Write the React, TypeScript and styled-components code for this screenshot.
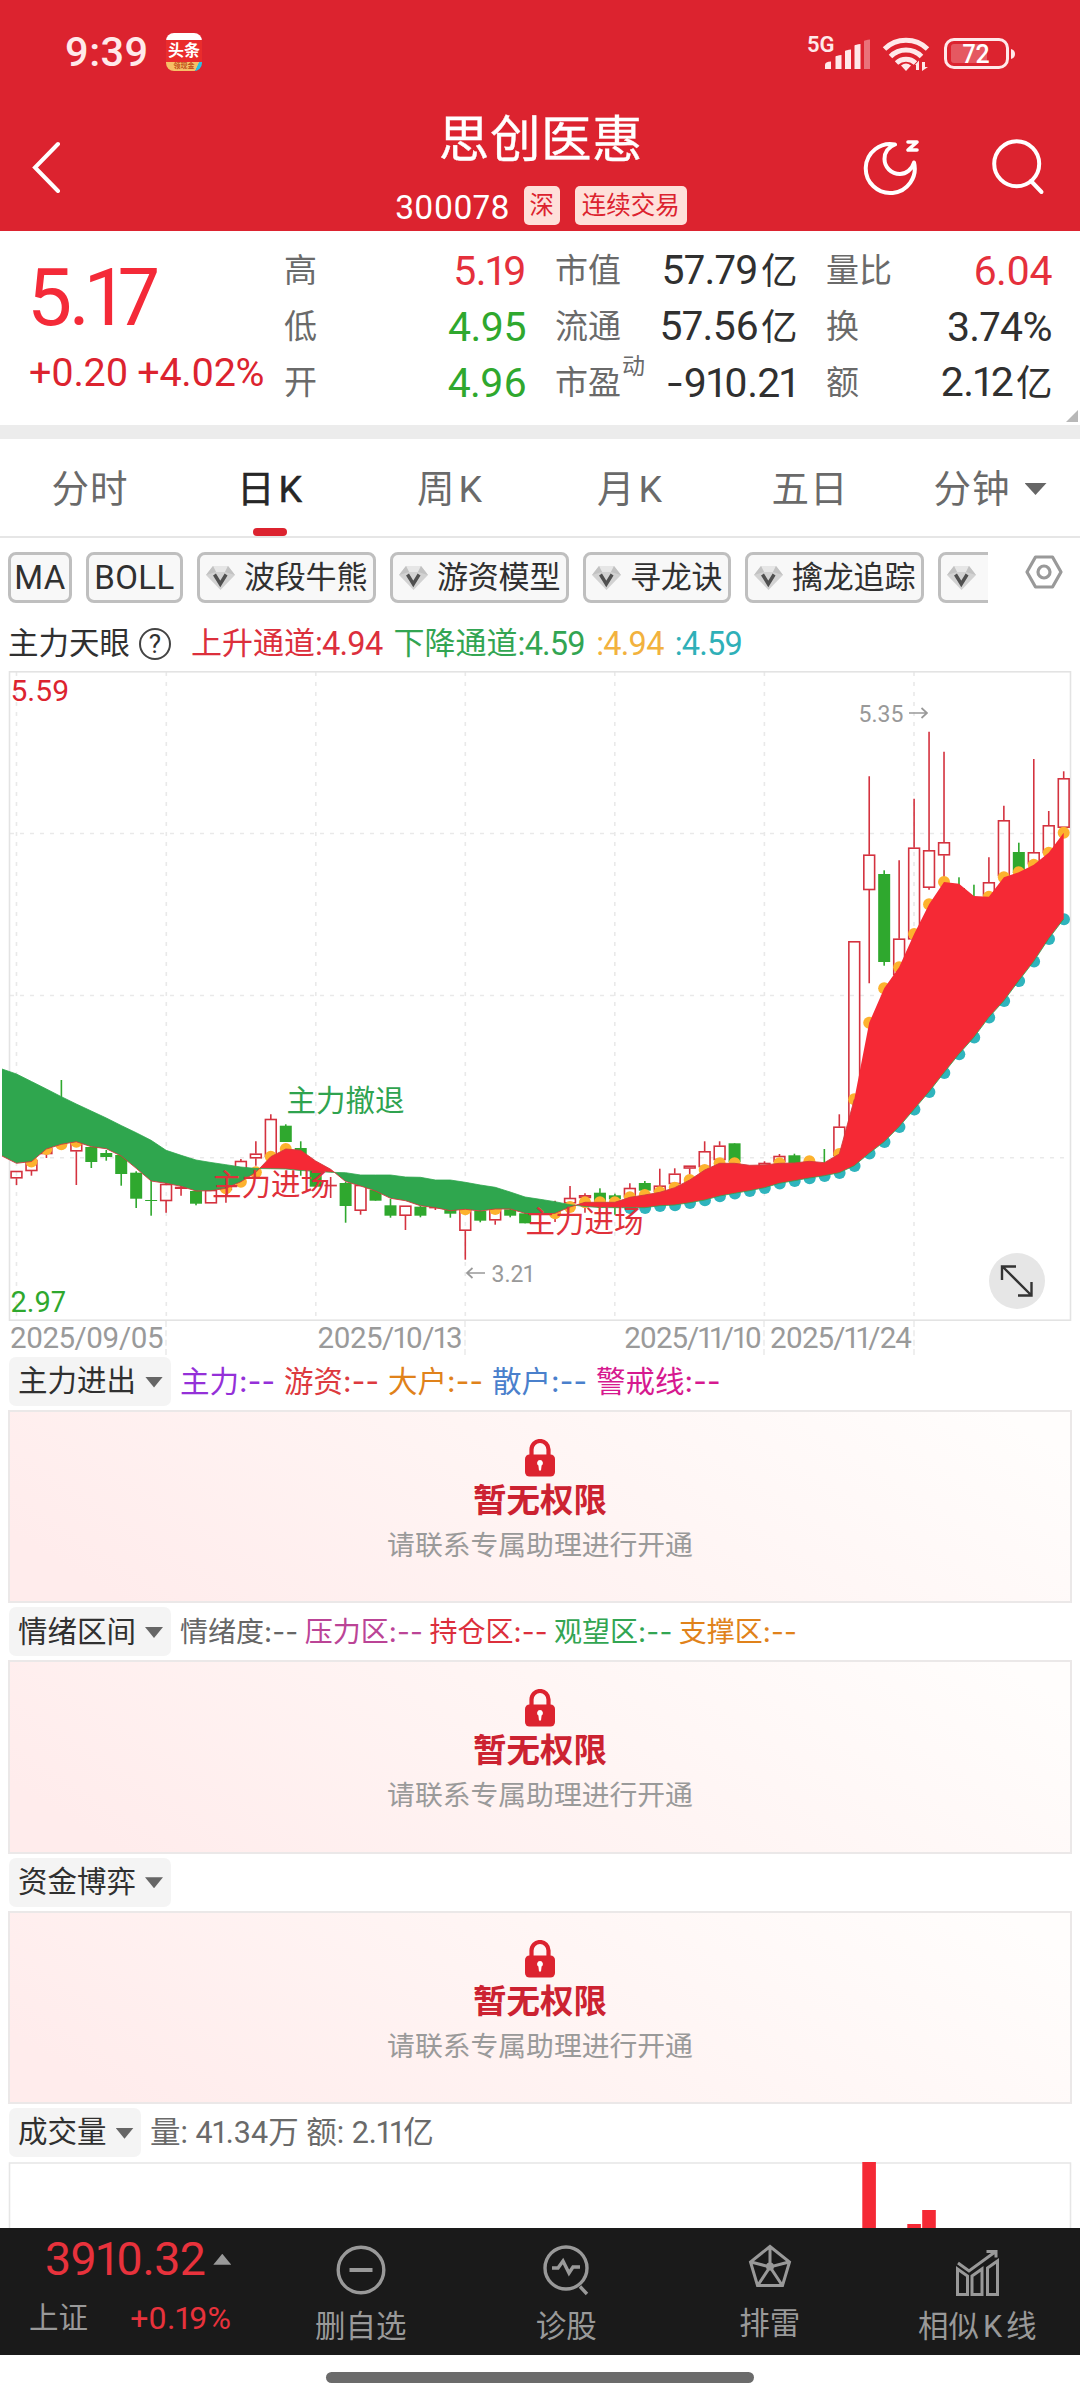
import React from 'react';
import styled, { createGlobalStyle } from 'styled-components';

const RED = '#dc232f';
const UP = '#f42a38';
const DOWN = '#2fa82e';
const INK = '#303030';
const GREY = '#6a6a6a';

const Global = createGlobalStyle`
  * { box-sizing: border-box; }
  body {
    margin: 0;
    background: #fff;
    font-family: Roboto, 'Noto Sans CJK SC', sans-serif;
    font-stretch: 94%;
    font-feature-settings: 'pnum';
    line-height: 1.2;
    color: ${INK};
    -webkit-font-smoothing: antialiased;
  }
`;

const Screen = styled.main`
  width: 1080px;
  height: 2400px;
  overflow: hidden;
  display: flex;
  flex-direction: column;
  background: #fff;
  white-space: nowrap;
`;

/* ---------- header ---------- */
const Header = styled.header`
  height: 231px;
  background: ${RED};
  color: #fff;
  flex: none;
`;
const StatusBar = styled.div`
  height: 104px;
  padding: 0 62px 0 65px;
  display: flex;
  align-items: center;
  color: #ffe9ea;
`;
const Clock = styled.span`
  font-size: 41.5px;
  line-height: 60px;
  font-weight: 460;
  letter-spacing: 0.3px;
  width: 101px;
`;
const AppBadge = styled.span`
  width: 36px;
  height: 38px;
  border-radius: 8px;
  overflow: hidden;
  background:
    linear-gradient(115deg, transparent 82%, #2cc0e0 83%) 0 29px / 36px 9px no-repeat,
    linear-gradient(#fff 0 7px, #ea2c2c 7px 29px, #f6c067 29px);
  display: flex;
  flex-direction: column;
  align-items: center;
  padding-top: 9px;
  color: #fff;
  font-weight: 700;
  font-size: 16px;
  line-height: 18px;
  margin-right: auto;
`;
const AppBadgeSub = styled.span`
  font-size: 7px;
  line-height: 9px;
  margin-top: 2px;
  color: #c0501c;
`;
const TitleBar = styled.div`
  height: 126px;
  display: grid;
  grid-template-columns: 300px 1fr 300px;
`;
const BackSlot = styled.div`
  padding: 37px 0 0 30px;
`;
const TitleCol = styled.div`
  display: flex;
  flex-direction: column;
  align-items: center;
`;
const Title = styled.h1`
  margin: 6px 0 0 2px;
  font-size: 50.5px;
  font-weight: 400;
  line-height: 60px;
  height: 75px;
  letter-spacing: 0.6px;
  -webkit-text-stroke: 0.4px #fff;
`;
const CodeRow = styled.div`
  display: flex;
  align-items: center;
  height: 40px;
  margin-left: 2px;
`;
const Code = styled.span`
  font-size: 33.5px;
  margin-right: 14px;
  padding-top: 7px;
  letter-spacing: 0.1px;
`;
const Badge = styled.span<{ $w: number }>`
  width: ${p => p.$w}px;
  height: 39px;
  margin-right: ${p => (p.$w < 50 ? 15 : 0)}px;
  border-radius: 5px;
  background: #fee0da;
  color: ${RED};
  font-size: 24.5px;
  line-height: 40px;
  text-align: center;
`;
const Actions = styled.div`
  display: flex;
  padding: 34px 0 0 82px;
  gap: 70px;
`;

/* ---------- quote ---------- */
const Quote = styled.section`
  height: 194px;
  flex: none;
  display: grid;
  grid-template-columns: 225px 242px 242px 226px;
  column-gap: 29px;
  padding-left: 30px;
  position: relative;
`;
const PriceCol = styled.div`
  padding-top: 24px;
`;
const Price = styled.div`
  color: ${UP};
  font-size: 80.5px;
  line-height: 86px;
  font-stretch: 89%;
  letter-spacing: -3.4px;
  margin-left: -3px;
`;
const Change = styled.div`
  color: ${RED};
  font-size: 39.5px;
  line-height: 50px;
  margin-top: 7px;
  margin-left: -1px;
  letter-spacing: -0.4px;
`;
const StatCol = styled.div`
  padding-top: 12px;
`;
const Stat = styled.div`
  height: 56px;
  display: flex;
  justify-content: space-between;
  align-items: center;
`;
const StatLabel = styled.span`
  color: ${GREY};
  font-size: 33px;
`;
const Sup = styled.sup`
  font-size: 23px;
  line-height: 0;
  vertical-align: 20px;
  margin-left: 1px;
`;
const StatValue = styled.span<{ $c?: string }>`
  color: ${p => p.$c || INK};
  font-size: 41px;
  line-height: 56px;
  letter-spacing: -0.6px;
`;
const Minus = styled.span`
  display: inline-block;
  transform: scaleX(1.3);
  margin-right: 4px;
`;
const Yi = styled.span`
  font-size: 36.5px;
  margin-left: 3px;
`;
const Corner = styled.i`
  position: absolute;
  right: 2px;
  bottom: 3px;
  border: 6px solid transparent;
  border-right-color: #b8b8b8;
  border-bottom-color: #b8b8b8;
`;
const Band = styled.div`
  height: 14px;
  background: #ececec;
  flex: none;
`;

/* ---------- tabs ---------- */
const Tabs = styled.nav`
  height: 99px;
  flex: none;
  display: grid;
  grid-template-columns: repeat(6, 180px);
  border-bottom: 2px solid #e6e6e6;
`;
const Tab = styled.div<{ $on?: boolean }>`
  display: flex;
  align-items: center;
  justify-content: center;
  gap: 14px;
  font-size: 37.5px;
  letter-spacing: 1px;
  padding-top: 3px;
  color: ${p => (p.$on ? '#262626' : GREY)};
  -webkit-text-stroke: ${p => (p.$on ? '0.5px #262626' : '0')};
  position: relative;
  &::after {
    content: '';
    display: ${p => (p.$on ? 'block' : 'none')};
    position: absolute;
    bottom: 0;
    left: 73px;
    width: 34px;
    height: 8px;
    border-radius: 4px;
    background: ${RED};
  }
`;
const TabK = styled.span`
  margin-left: -11px;
`;
const Caret = styled.i<{ $w: number; $h: number; $up?: boolean }>`
  width: ${p => p.$w}px;
  height: ${p => p.$h}px;
  flex: none;
  background: ${p => (p.$up ? '#999' : '#666')};
  clip-path: ${p => (p.$up ? 'polygon(50% 0, 100% 100%, 0 100%)' : 'polygon(0 0, 100% 0, 50% 100%)')};
`;

/* ---------- chips ---------- */
const ChipBar = styled.div`
  height: 78px;
  flex: none;
  padding: 14px 17px 0 8px;
  display: flex;
  justify-content: space-between;
`;
const ChipList = styled.div`
  width: 980px;
  overflow: hidden;
  display: flex;
  gap: 14px;
`;
const Chip = styled.div<{ $w: number; $latin?: boolean }>`
  width: ${p => p.$w}px;
  height: 51px;
  flex: none;
  border: 3px solid #bfbfbf;
  border-radius: 8px;
  background: #f8f8f8;
  display: flex;
  align-items: center;
  justify-content: ${p => (p.$latin ? 'center' : 'flex-start')};
  padding-left: ${p => (p.$latin ? 0 : 5)}px;
  gap: 8px;
  overflow: hidden;
  font-size: ${p => (p.$latin ? 33 : 31)}px;
  line-height: 45px;
  letter-spacing: ${p => (p.$latin ? 0.4 : -0.2)}px;
`;

/* ---------- chart ---------- */
const Legend = styled.div`
  height: 55px;
  flex: none;
  display: flex;
  align-items: center;
  padding: 1px 0 0 8px;
  font-size: 30.5px;
`;
const LegendItem = styled.span<{ $c: string; $gap: number }>`
  color: ${p => p.$c};
  margin-left: ${p => p.$gap}px;
  font-size: 31px;
`;
const Num = styled.span`
  font-size: 32.5px;
  letter-spacing: -0.8px;
  vertical-align: -1px;
  line-height: 0;
`;
const ChartBox = styled.div`
  height: 650px;
  flex: none;
  position: relative;
`;
const ExpandButton = styled.button`
  position: absolute;
  left: 989px;
  top: 582px;
  width: 56px;
  height: 56px;
  padding: 0;
  border: 0;
  border-radius: 50%;
  background: #e6e6e6;
`;
const Dates = styled.div`
  height: 32px;
  flex: none;
  display: grid;
  grid-template-columns: 167px 299px 299px 150px;
`;
const DateCell = styled.span<{ $ls?: number }>`
  border-right: 2px dashed #efefef;
  text-align: right;
  padding-right: 2px;
  color: #9a9a9a;
  font-size: 29.5px;
  line-height: 34px;
  letter-spacing: ${p => p.$ls ?? -0.6}px;
`;

/* ---------- locked panels ---------- */
const PanelHead = styled.div`
  height: 57px;
  flex: none;
  padding: 4px 0 4px 9px;
  display: flex;
  align-items: center;
`;
const Picker = styled.div<{ $w: number }>`
  width: ${p => p.$w}px;
  height: 49px;
  border-radius: 7px;
  background: #f4f4f4;
  padding: 1px 0 0 9px;
  display: flex;
  align-items: center;
  gap: 9px;
  font-size: 29.5px;
  margin-right: 9px;
`;
const Series = styled.span<{ $c: string; $w: number; $s: number }>`
  width: ${p => p.$w}px;
  padding-top: 2px;
  font-size: ${p => p.$s}px;
  color: ${p => p.$c};
`;
const Dash = styled.span`
  font-family: Inter, sans-serif;
  letter-spacing: 0.2px;
`;
const Locked = styled.div`
  height: 193.4px;
  flex: none;
  margin: 0 8px;
  border: 2px solid #ebe8e8;
  background: linear-gradient(32deg, #ffecec 8%, #fff5f4 54%, #fffdfc 95%);
  display: flex;
  flex-direction: column;
  align-items: center;
  padding-top: 27px;
`;
const LockTitle = styled.div`
  margin-top: 3px;
  font-size: 33.5px;
  line-height: 42px;
  font-weight: 700;
  color: #cc2231;
`;
const LockText = styled.div`
  margin-top: 3px;
  font-size: 27.8px;
  line-height: 42px;
  color: #9a9a9a;
`;
const VolumeText = styled.span`
  font-size: 30.5px;
  padding-top: 2px;
  color: ${GREY};
`;
const VolumeBox = styled.div`
  height: 67px;
  flex: none;
`;

/* ---------- bottom bar ---------- */
const BottomBar = styled.footer`
  height: 127px;
  flex: none;
  background: #1a1a1a;
  color: #999;
  display: grid;
  grid-template-columns: 258px repeat(4, 205.5px);
`;
const IndexCell = styled.div`
  padding: 3px 27px 0 29px;
`;
const IndexValue = styled.div`
  display: flex;
  align-items: center;
  gap: 8px;
  padding-left: 16px;
  color: #e8323c;
  font-size: 46.5px;
  line-height: 56px;
  letter-spacing: -0.6px;
`;
const IndexRow = styled.div`
  display: flex;
  justify-content: space-between;
  align-items: center;
  margin-top: 11px;
  font-size: 29.5px;
  line-height: 40px;
`;
const IndexPct = styled.span`
  color: #e8323c;
  font-size: 32px;
`;
const NavItem = styled.div<{ $shift?: boolean }>`
  display: flex;
  flex-direction: column;
  align-items: center;
  padding-top: 14px;
  font-size: 30.5px;
  line-height: 40px;
  margin: ${p => (p.$shift ? '-3px 2px 0 -2px' : '0')};
  svg { margin-bottom: 9px; }
`;
const NavK = styled.span`
  margin: 0 4px;
`;
const HomeArea = styled.div`
  height: 45px;
  flex: none;
  display: flex;
  justify-content: center;
  padding-top: 17px;
`;
const HomeBar = styled.div`
  width: 428px;
  height: 11px;
  border-radius: 6px;
  background: #6b6b6b;
`;

/* ---------- icons ---------- */
const StatusIcons = () => (
  <svg width="212" height="44" viewBox="806 28 212 44" fill="#ffe9ea">
    <text x="807" y="49.500" fontSize="22" fontWeight="600">5G</text>
    <path d="M825 67v-4q0-3.500 6-3.500V67zM835.500 67V54.500q1-1 6-1.500v14zM845 67V49q1-1 6-1.500V67zM854.500 67V43.500q1-1 6-1.500V67z" />
    <path d="M864 67V39q1-1 6-1.500V67z" opacity=".4" />
    <g fill="none" stroke="#ffe9ea" strokeWidth="5">
      <path d="M884.500 47a31 31 0 0 1 43 0M890.500 54.500a22 22 0 0 1 31 0M896.500 61a14 14 0 0 1 19 0" />
    </g>
    <path d="M901 63.500q5-4 10 0L906 69z" />
    <path d="M915 63l4-4.500V68h-3v-5zM922 69V60h3v5h3z" />
    <rect x="945.500" y="37.500" width="62" height="28" rx="8.500" fill="none" stroke="#ffe9ea" strokeWidth="3" />
    <rect x="951" y="42" width="36" height="19" rx="3" opacity=".27" />
    <path d="M1011 47q4 1 4 5t-4 5z" />
    <text x="962.500" y="61" fontSize="25" fontWeight="500" fill="#fff">72</text>
  </svg>
);
const Back = () => (
  <svg width="34" height="52" viewBox="0 0 34 52" fill="none" stroke="#fff" strokeWidth="4" strokeLinecap="round">
    <path d="M28 3L5 26.500L28 50" />
  </svg>
);
const Moon = () => (
  <svg width="58" height="58" viewBox="862 138 58 58" fill="none" stroke="#fff" strokeWidth="4" strokeLinejoin="round" strokeLinecap="round">
    <path d="M895 144.500a24.500 24.500 0 1 0 19 18c-2 7-8 11.500-14 11.500c-9 0-15.500-7-15.500-15c0-7 4-12 10.500-14.500z" />
    <path d="M908 142h9l-9 8h9" strokeWidth="3.600" />
  </svg>
);
const Search = () => (
  <svg width="58" height="58" viewBox="990 138 58 58" fill="none" stroke="#fff" strokeWidth="4" strokeLinecap="round">
    <circle cx="1016.700" cy="163.700" r="22.500" />
    <path d="M1031 181l10.500 11" />
  </svg>
);
const Gem = () => (
  <svg width="31" height="26" viewBox="0 0 31 26">
    <path d="M8 1h15l7 9-14.500 15L1 10z" fill="#d2d2d2" />
    <path d="M8 1h15l-3 6H11z" fill="#e6e6e6" />
    <path d="M1 10l7-9 3 6zM30 10l-7-9-3 6z" fill="#c2c2c2" />
    <path d="M9.500 9.500l5.800 9.500 5.800-9.500" fill="none" stroke="#505050" strokeWidth="3.400" />
  </svg>
);
const HexIcon = styled.svg`
  margin-top: 3px;
`;
const Hex = () => (
  <HexIcon width="38" height="34" viewBox="0 0 38 34" fill="none" stroke="#999" strokeWidth="3.2">
    <path d="M10.500 2h17l8.500 15-8.500 15h-17L2 17z" strokeLinejoin="round" />
    <circle cx="19" cy="17" r="6" />
  </HexIcon>
);
const HelpMark = styled.span`
  width: 32px;
  height: 32px;
  margin: -1px 0 0 9px;
  border: 2.5px solid #444;
  border-radius: 50%;
  font-size: 26px;
  line-height: 28px;
  text-align: center;
`;
const Lock = () => (
  <svg width="32" height="38" viewBox="0 0 32 38">
    <path d="M7.500 17v-6.500a8.500 8.500 0 0 1 17 0V17" fill="none" stroke={RED} strokeWidth="4.200" />
    <rect x="1" y="15.500" width="30" height="22" rx="4.500" fill={RED} />
    <path d="M16 21a3 3 0 0 1 1.600 5.500L17 31.500h-2l-.6-5A3 3 0 0 1 16 21z" fill="#fff" />
  </svg>
);
const navProps = { width: 56, height: 56, fill: 'none', stroke: '#999', strokeWidth: 3.4 };
const MinusIcon = () => (
  <svg {...navProps} viewBox="333 2242 56 56">
    <circle cx="361" cy="2270" r="22.800" />
    <path d="M349.500 2270h23" strokeWidth="4" />
  </svg>
);
const PulseIcon = () => (
  <svg {...navProps} viewBox="538 2242 56 56">
    <circle cx="566" cy="2268" r="21" />
    <path d="M552 2268h6l5-7 6 12 4-6h7M580 2286.500l7 7.500" />
  </svg>
);
const StarIcon = () => (
  <svg {...navProps} viewBox="742 2239 56 56" strokeWidth={3}>
    <path d="M770 2246.500l19.500 15.500-7 23.500h-25L750.500 2262zM770 2247v20M751 2262l19 5 19-5M758 2285l12-18 12 18" />
    <circle cx="770" cy="2266.500" r="2.500" fill="#999" />
  </svg>
);
const TrendIcon = () => (
  <svg {...navProps} viewBox="949 2242 56 56" strokeWidth={3}>
    <path d="M957.500 2269l10 7v18.500h-10zM972 2276l10-7v25.500h-10zM987.500 2268l10-7v33.500h-10z" />
    <path d="M958 2263l11 8 26-19M986.500 2251.500h9.500v6" />
  </svg>
);

/* ---------- price chart ---------- */
const STEP = 14.96;
const px = (i: number) => 16.5 + STEP * i;

// [index, up, high, bodyTop, bodyBottom, low]
const candles: [number, boolean, number, number, number, number][] = [
  [0, true, 1171, 1171, 1178.3, 1185], [1, true, 1160, 1160, 1171, 1175.7], [2, true, 1148, 1148, 1154, 1158],
  [3, false, 1080, 1120, 1136, 1140], [4, true, 1143, 1143, 1151.3, 1185], [5, false, 1147, 1147, 1162, 1168],
  [6, false, 1150, 1153, 1157, 1160.7], [7, false, 1155, 1155, 1174, 1185.7], [8, false, 1171.3, 1172.7, 1198.7, 1208],
  [9, false, 1181, 1200, 1201, 1215.7], [10, true, 1183, 1184, 1201, 1212.7], [11, true, 1186, 1187, 1188.7, 1195.7],
  [12, false, 1190, 1191, 1203.7, 1205.3], [13, true, 1190, 1190, 1203.3, 1203.3], [14, true, 1186, 1186, 1190, 1202.7],
  [15, true, 1159, 1161, 1170, 1170], [16, true, 1141.3, 1153.7, 1158.3, 1165.7], [17, true, 1114.3, 1119, 1157, 1157],
  [18, false, 1124.3, 1125.7, 1142, 1142], [19, false, 1141.3, 1148, 1170, 1175.7], [20, false, 1170, 1170, 1186.7, 1186.7],
  [21, true, 1177, 1185, 1185.6, 1198], [22, false, 1182, 1183, 1206, 1222.7], [23, true, 1185, 1185, 1210.7, 1214.7],
  [24, false, 1190, 1190, 1200.7, 1200.7], [25, false, 1199, 1205.3, 1215.7, 1217.7], [26, true, 1205.7, 1205.7, 1215.7, 1230],
  [27, false, 1206, 1206.7, 1215.7, 1217.3], [28, true, 1206, 1207, 1208, 1210], [29, false, 1210, 1210, 1213.7, 1217.7],
  [30, true, 1209, 1209, 1230.7, 1259.7], [31, false, 1211, 1211, 1220.7, 1222.3], [32, true, 1209, 1209, 1220.3, 1224.7],
  [33, false, 1209, 1209.3, 1215.7, 1217.3], [34, false, 1213, 1213.3, 1223.3, 1223.3], [35, true, 1208, 1210, 1212, 1212],
  [36, true, 1200.7, 1207, 1211, 1222], [37, true, 1186, 1198, 1203.3, 1208], [38, true, 1193.3, 1195.3, 1198, 1212.7],
  [39, false, 1188.3, 1192.7, 1201.7, 1201.7], [40, false, 1193.7, 1195.3, 1199.3, 1214.7], [41, true, 1183.3, 1188, 1197, 1197],
  [42, false, 1181, 1183, 1190.7, 1190.7], [43, true, 1168.7, 1185.7, 1191.7, 1191.7], [44, true, 1168.3, 1173.7, 1184, 1184],
  [45, true, 1165.7, 1165.7, 1168.5, 1174.7], [46, true, 1141.3, 1151.3, 1167, 1167], [47, true, 1141.3, 1145.7, 1160, 1160],
  [48, false, 1143.3, 1143.3, 1162, 1162], [50, true, 1161.3, 1163, 1166, 1166], [51, true, 1154, 1156, 1162, 1162],
  [52, false, 1153.7, 1155.3, 1163, 1163], [54, false, 1149, 1163, 1168, 1168], [55, true, 1114.3, 1126.7, 1156, 1156],
  [56, true, 941.3, 941.3, 1150, 1150], [57, true, 776.3, 854.7, 890, 983.3], [58, false, 870.3, 874, 962, 965.7],
  [59, true, 860.3, 938.7, 975, 975], [60, true, 798.7, 847.7, 939.3, 939.3], [61, true, 731.7, 850.3, 887.7, 889.7],
  [62, true, 751.7, 842.3, 855.3, 882], [63, false, 877.3, 888, 895, 895], [64, false, 884.7, 899, 905, 905],
  [65, true, 857.3, 882.3, 896, 896], [66, true, 805.7, 820.3, 876, 876], [67, false, 842.7, 852, 873, 873],
  [68, true, 759, 852.3, 864, 864], [69, true, 811, 825.3, 853, 853], [70, true, 771.3, 778.3, 827.7, 827.7],
];

const fast = [
  1163.3, 1161.5, 1149, 1144.3, 1141.7, 1146.7, 1148.7, 1156, 1168.3, 1181, 1183.3, 1186.3, 1191, 1190.7, 1188.3,
  1181.7, 1172.3, 1156.7, 1149, 1150.3, 1161, 1169.3, 1181.5, 1186, 1191, 1198.3, 1200.7, 1205.7, 1207.7, 1210.7,
  1209.3, 1211, 1209, 1209, 1213.3, 1214.3, 1213.3, 1207, 1202.3, 1202.3, 1202.3, 1197.3, 1195, 1192.3, 1187.7,
  1180, 1170, 1163.3, 1163.3, 1165.3, 1165, 1163.3, 1163, 1161.3, 1162.7, 1154, 1099.3, 1022.7, 988.3, 967.3,
  934, 904.3, 882, 883.7, 896, 896.7, 877.3, 872.3, 864.7, 852.7, 832.7,
];
const slow = [
  1074, 1081.5, 1089, 1096.7, 1104, 1111, 1118, 1125.5, 1132.7, 1140.3, 1150.3, 1155.3, 1160, 1162.5, 1164.7,
  1167, 1168.5, 1168.7, 1169, 1170.5, 1171.3, 1172.3, 1172.7, 1175, 1175, 1175, 1177, 1177.3, 1180, 1180,
  1182.3, 1185, 1187.3, 1192, 1197, 1199.3, 1201.7, 1204.7, 1206.5, 1207.5, 1207.7, 1207.7, 1207.7, 1205.7, 1205,
  1202.7, 1200, 1196, 1193.3, 1190.7, 1187.7, 1183.3, 1180.7, 1178, 1175.7, 1172.7, 1165.7, 1153.3, 1141.7, 1126.7,
  1109.3, 1091.7, 1072.7, 1054, 1037.3, 1017.3, 1000.7, 980.7, 961.3, 938.7, 919,
];
const fastDots = [1, 2, 3, 4, 14, 15, 16, 17, 18, 30, 32, 36, 37, 38, 39, 40, 41, 42, 43, 44, 45, 46, 47, 48, 51, 53, 55, 56, 57, 58, 59, 60, 61, 62, 65, 66, 67, 68, 69, 70];
const slowDots = Array.from({ length: 30 }, (_, k) => 41 + k);

type P = [number, number, number];
const band: P[] = [[2, 1156, 1069], ...fast.map((f, i): P => [px(i), f, slow[i]])];

function splitBand(points: P[]) {
  const runs: { up: boolean; pts: P[] }[] = [{ up: points[0][1] < points[0][2], pts: [points[0]] }];
  for (let i = 1; i < points.length; i++) {
    const [x0, a0, b0] = points[i - 1];
    const [x1, a1, b1] = points[i];
    const up = a1 < b1;
    const run = runs[runs.length - 1];
    if (up !== run.up) {
      const t = (a0 - b0) / (a0 - b0 - (a1 - b1));
      const y = a0 + t * (a1 - a0);
      const cross: P = [x0 + t * (x1 - x0), y, y];
      run.pts.push(cross);
      runs.push({ up, pts: [cross] });
    }
    runs[runs.length - 1].pts.push(points[i]);
  }
  return runs;
}
const line = (pts: P[], k: 1 | 2) => pts.map(p => `${p[0].toFixed(1)},${p[k].toFixed(1)}`).join(' ');

const GRID_X = [16.5, 166.3, 315.8, 465.3, 614.8, 764.4, 914];
const GRID_Y = [833.5, 995.5, 1157.7];

const PriceChart = () => (
  <svg width="1080" height="650" viewBox="0 671 1080 650" display="block">
    <g stroke="#e9e9e9" strokeWidth="1.600" strokeDasharray="4 6" fill="none">
      {GRID_X.map(x => <path key={x} d={`M${x} 672V1320`} />)}
      {GRID_Y.map(y => <path key={y} d={`M10 ${y}H1070`} />)}
    </g>
    <rect x="9.500" y="671.800" width="1061" height="648.400" fill="none" stroke="#e3e3e3" strokeWidth="1.600" />
    {candles.map(([i, up, hi, top, bottom, lo]) => {
      const x = px(i);
      return up ? (
        <g key={i} stroke="#d4323f" strokeWidth="1.600" fill="none">
          <path d={`M${x} ${hi}V${top}M${x} ${bottom}V${lo}`} />
          <rect x={x - 5.4} y={top + 0.5} width="10.800" height={Math.max(0.1, bottom - top - 1)} />
        </g>
      ) : (
        <g key={i} fill={DOWN}>
          <rect x={x - 0.8} y={hi} width="1.600" height={lo - hi} />
          <rect x={x - 6} y={top} width="12" height={bottom - top} />
        </g>
      );
    })}
    <g fill="#fdb22e">{fastDots.map(i => <circle key={i} cx={px(i)} cy={fast[i]} r="6" />)}</g>
    <g fill="#2fb4bd">{slowDots.map(i => <circle key={i} cx={px(i) + 0.3} cy={slow[i] + 0.3} r="6" />)}</g>
    {splitBand(band).map((r, k) => (
      <polygon key={k} fill={r.up ? '#f52935' : '#2fa64e'} points={`${line(r.pts, 1)} ${line([...r.pts].reverse(), 2)}`} />
    ))}
    <polyline points={line(band, 2)} fill="none" stroke="#2fa64e" strokeWidth="0.800" />
    <polyline points={line(band.slice(0, 58), 1)} fill="none" stroke="#d03a3c" strokeWidth="0.900" />
    <g fontSize="29.500">
      <text x="286.500" y="1111" fill="#2fa34f">主力撤退</text>
      <text x="212" y="1195" fill="#e0303a">主力进场</text>
      <text x="525.500" y="1231.500" fill="#e0303a">主力进场</text>
      <text x="10.500" y="701" fill={RED} fontSize="30">5.59</text>
      <text x="10.500" y="1312" fill={DOWN} fontSize="29">2.97</text>
    </g>
    <g fontSize="23" fill="#999">
      <text x="858.500" y="721.500">5.35</text>
      <text x="491.500" y="1281.500">3.21</text>
    </g>
    <path d="M909 713h18M921.500 708l5.500 5-5.500 5M485 1273h-18M472.500 1268l-5.500 5 5.500 5" fill="none" stroke="#999" strokeWidth="1.700" />
  </svg>
);

const VolumeChart = () => (
  <svg width="1080" height="67" viewBox="0 2161 1080 67" display="block">
    <path d="M9.500 2228V2163H1070.500V2228" fill="none" stroke="#e6e6e6" strokeWidth="1.600" />
    <rect x="862.300" y="2162" width="13.600" height="66" fill="#f52935" />
    <rect x="907.300" y="2224" width="13.600" height="4" fill="#f52935" />
    <rect x="922.200" y="2210" width="13.600" height="18" fill="#f52935" />
  </svg>
);

const LockedCard = () => (
  <Locked>
    <Lock />
    <LockTitle>暂无权限</LockTitle>
    <LockText>请联系专属助理进行开通</LockText>
  </Locked>
);

type Item = [string, string];
const Head = ({ name, items, w = 104, s = 29.5 }: { name: string; items: Item[]; w?: number; s?: number }) => (
  <PanelHead>
    <Picker $w={162}>{name}<Caret $w={18} $h={11} /></Picker>
    {items.map(([t, c]) => <Series key={t} $c={c} $w={w} $s={s}>{t}<Dash>:--</Dash></Series>)}
  </PanelHead>
);

export default function App() {
  return (
    <Screen>
      <Global />
      <Header>
        <StatusBar>
          <Clock>9:39</Clock>
          <AppBadge>头条<AppBadgeSub>领现金</AppBadgeSub></AppBadge>
          <StatusIcons />
        </StatusBar>
        <TitleBar>
          <BackSlot><Back /></BackSlot>
          <TitleCol>
            <Title>思创医惠</Title>
            <CodeRow>
              <Code>300078</Code>
              <Badge $w={36}>深</Badge>
              <Badge $w={112}>连续交易</Badge>
            </CodeRow>
          </TitleCol>
          <Actions><Moon /><Search /></Actions>
        </TitleBar>
      </Header>

      <Quote>
        <PriceCol>
          <Price>5.17</Price>
          <Change>+0.20 +4.02%</Change>
        </PriceCol>
        <StatCol>
          <Stat><StatLabel>高</StatLabel><StatValue $c="#e5303c">5.19</StatValue></Stat>
          <Stat><StatLabel>低</StatLabel><StatValue $c={DOWN}>4.95</StatValue></Stat>
          <Stat><StatLabel>开</StatLabel><StatValue $c={DOWN}>4.96</StatValue></Stat>
        </StatCol>
        <StatCol>
          <Stat><StatLabel>市值</StatLabel><StatValue>57.79<Yi>亿</Yi></StatValue></Stat>
          <Stat><StatLabel>流通</StatLabel><StatValue>57.56<Yi>亿</Yi></StatValue></Stat>
          <Stat><StatLabel>市盈<Sup>动</Sup></StatLabel><StatValue><Minus>-</Minus>910.21</StatValue></Stat>
        </StatCol>
        <StatCol>
          <Stat><StatLabel>量比</StatLabel><StatValue $c="#e5303c">6.04</StatValue></Stat>
          <Stat><StatLabel>换</StatLabel><StatValue>3.74%</StatValue></Stat>
          <Stat><StatLabel>额</StatLabel><StatValue>2.12<Yi>亿</Yi></StatValue></Stat>
        </StatCol>
        <Corner />
      </Quote>
      <Band />

      <Tabs>
        <Tab>分时</Tab>
        <Tab $on>日<TabK>K</TabK></Tab>
        <Tab>周<TabK>K</TabK></Tab>
        <Tab>月<TabK>K</TabK></Tab>
        <Tab>五日</Tab>
        <Tab>分钟<Caret $w={22} $h={12} /></Tab>
      </Tabs>

      <ChipBar>
        <ChipList>
          <Chip $w={64} $latin>MA</Chip>
          <Chip $w={97} $latin>BOLL</Chip>
          <Chip $w={179}><Gem />波段牛熊</Chip>
          <Chip $w={179}><Gem />游资模型</Chip>
          <Chip $w={148}><Gem />寻龙诀</Chip>
          <Chip $w={179}><Gem />擒龙追踪</Chip>
          <Chip $w={179}><Gem /></Chip>
        </ChipList>
        <Hex />
      </ChipBar>

      <Legend>
        主力天眼<HelpMark>?</HelpMark>
        <LegendItem $c="#dc2f3c" $gap={20}>上升通道<Num>:4.94</Num></LegendItem>
        <LegendItem $c="#32a552" $gap={11}>下降通道<Num>:4.59</Num></LegendItem>
        <LegendItem $c="#f2b23e" $gap={11}><Num>:4.94</Num></LegendItem>
        <LegendItem $c="#2fb0b8" $gap={11}><Num>:4.59</Num></LegendItem>
      </Legend>

      <ChartBox>
        <PriceChart />
        <ExpandButton>
          <svg width="56" height="56" viewBox="0 0 56 56" fill="none" stroke="#333" strokeWidth="2.400">
            <path d="M14 14l28 28M13 27V13.500h14M42.500 29v13.500H29" />
          </svg>
        </ExpandButton>
      </ChartBox>
      <Dates>
        <DateCell>2025/09/05</DateCell>
        <DateCell>2025/10/13</DateCell>
        <DateCell $ls={-1}>2025/11/10</DateCell>
        <DateCell $ls={-0.9}>2025/11/24</DateCell>
      </Dates>

      <Head name="主力进出" items={[['主力', '#9430d8'], ['游资', '#dd3a3f'], ['大户', '#e0821a'], ['散户', '#4a80cc'], ['警戒线', '#d6198f']]} />
      <LockedCard />
      <Head name="情绪区间" w={124.7} s={28} items={[['情绪度', '#666'], ['压力区', '#bb4496'], ['持仓区', '#dc2f3c'], ['观望区', '#32a552'], ['支撑区', '#e0821a']]} />
      <LockedCard />
      <Head name="资金博弈" items={[]} />
      <LockedCard />
      <PanelHead>
        <Picker $w={132}>成交量<Caret $w={18} $h={11} /></Picker>
        <VolumeText>量: 41.34万 额: 2.11亿</VolumeText>
      </PanelHead>
      <VolumeBox><VolumeChart /></VolumeBox>

      <BottomBar>
        <IndexCell>
          <IndexValue>3910.32<Caret $w={18} $h={11} $up /></IndexValue>
          <IndexRow>上证<IndexPct>+0.19%</IndexPct></IndexRow>
        </IndexCell>
        <NavItem><MinusIcon />删自选</NavItem>
        <NavItem><PulseIcon />诊股</NavItem>
        <NavItem $shift><StarIcon />排雷</NavItem>
        <NavItem><TrendIcon /><span>相似<NavK>K</NavK>线</span></NavItem>
      </BottomBar>
      <HomeArea><HomeBar /></HomeArea>
    </Screen>
  );
}
